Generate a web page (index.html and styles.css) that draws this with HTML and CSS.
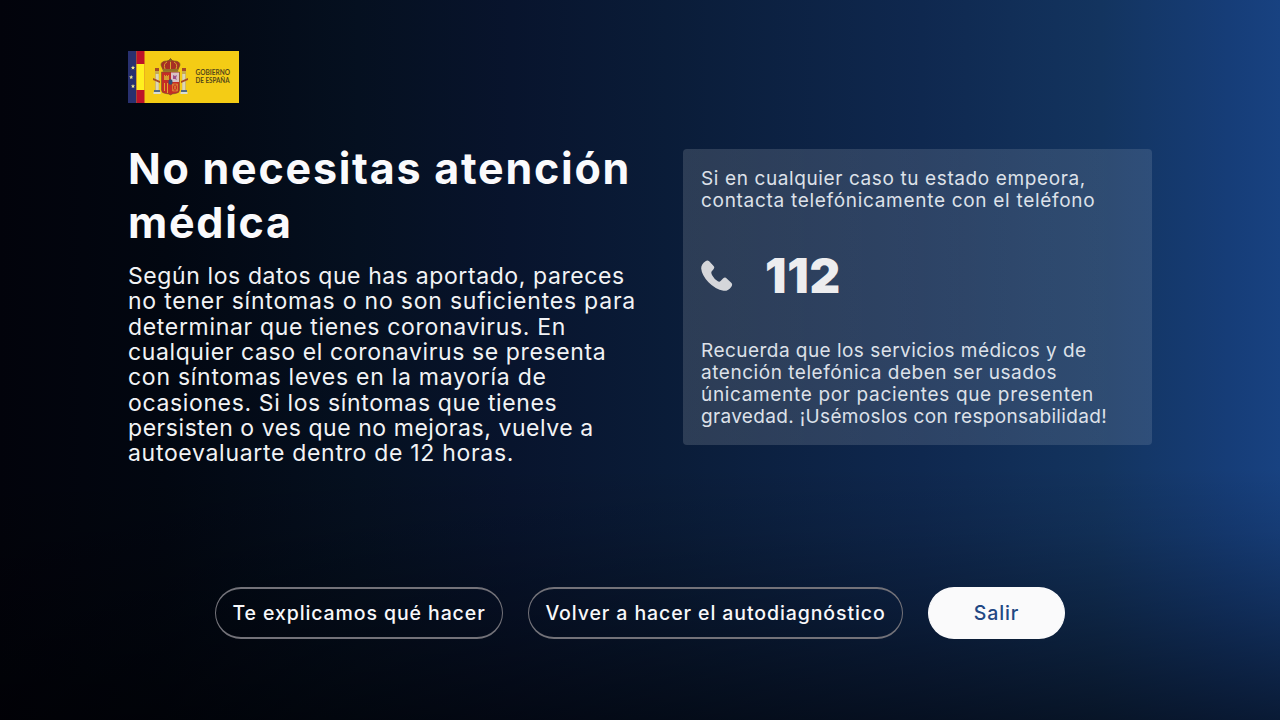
FILE: index.html
```html
<!DOCTYPE html>
<html lang="es">
<head>
<meta charset="utf-8">
<title>Autodiagnóstico</title>
<link rel="stylesheet" href="styles.css">
</head>
<body>
<div class="screen">
  <header class="header">
    <svg class="logo" viewBox="0 0 111 52">
      <rect width="111" height="52" fill="#f4cc15"/>
      <rect width="8.5" height="52" fill="#28306f"/>
      <rect x="8.5" width="8" height="52" fill="#bd1229"/>
      <rect x="8.5" y="13" width="8" height="26" fill="#fff01f"/>
      <path fill="#eee88a" d="M5 14.5l.6 1.4 1.5.1-1.2 1 .4 1.5L5 17.700l-1.300.8.4-1.500-1.200-1 1.500-.1z"/>
      <path fill="#eee88a" d="M3.200 24l.6 1.400 1.500.1-1.200 1 .4 1.500-1.300-.8-1.300.8.4-1.500-1.200-1 1.500-.1zM5 33l.6 1.400 1.500.1-1.200 1 .4 1.500-1.300-.8-1.300.8.4-1.500-1.200-1 1.500-.1z"/>
      <g>
        <path fill="#c7aa4e" d="M27 18h4v22h-4zM54 18h4v22h-4z"/>
        <path fill="#ddd6b5" d="M27.700 23h3v17h-3zM54.300 23h3v17h-3z"/>
        <path fill="#a64b27" d="M27 17h4v3h-4zM54 17h4v3h-4zM25 27l7 3v2l-7-3zM60 27l-7 3v2l7-3z"/>
        <path fill="#536a83" d="M26 39h6v2h-6zM53 39h6v2h-6z"/>
        <path fill="#d9ddd0" d="M25.500 41h7v2h-7zM52.500 41h7v2h-7z"/>
        <path fill="#a72f24" stroke="#765820" stroke-width=".7" d="M35.500 20l-2.500-6q0-4 6-4 3-2 7 0 6 0 6 4l-2.500 6z"/>
        <path fill="none" stroke="#d6a52c" d="M42.500 19V9M37 18q-2-5 2-7M48 18q2-5-2-7"/>
        <path fill="none" stroke="#765820" stroke-width=".8" d="M42.500 7v4M41 8.500h3"/>
        <path fill="#947028" d="M35 18h15v2.500H35z"/>
        <path fill="#c52d25" stroke="#725331" stroke-width=".6" d="M33.500 21h18v18q0 3-4 3.500-3.500 0-5 1.500-1.500-1.500-5-1.500-4-.5-4-3.500z"/>
        <path fill="#d9c1c5" d="M43 21.500h8V31H43z"/>
        <path fill="#9d4e86" d="M45 28v-4l2 1 2-1-1 3 1 2-2-1z"/>
        <path fill="#d79b31" d="M36 29v-5h1v1h1v-1h1v1h1v-1h1v5z"/>
        <path stroke="#e0a62d" d="M36.500 32v8M39.500 32v10"/>
        <path fill="none" stroke="#dc8d35" stroke-width=".8" d="M44.500 33h5v7h-5zM45 33l4 7M49 33l-4 7"/>
        <ellipse cx="42.500" cy="31" rx="2" ry="2.800" fill="#315177"/>
      </g>
      <text class="logo-text" x="67.500" y="24" textLength="34.500" lengthAdjust="spacingAndGlyphs">GOBIERNO</text>
      <text class="logo-text" x="67.500" y="32" textLength="34" lengthAdjust="spacingAndGlyphs">DE ESPAÑA</text>
    </svg>
  </header>
  <main class="content">
    <section class="result">
      <h1 class="title"><span class="line t1">No necesitas atención</span><span class="line t2">médica</span></h1>
      <p class="body-text">
        <span class="line b1">Según los datos que has aportado, pareces</span>
        <span class="line b2">no tener síntomas o no son suficientes para</span>
        <span class="line b3">determinar que tienes coronavirus. En</span>
        <span class="line b4">cualquier caso el coronavirus se presenta</span>
        <span class="line b5">con síntomas leves en la mayoría de</span>
        <span class="line b6">ocasiones. Si los síntomas que tienes</span>
        <span class="line b7">persisten o ves que no mejoras, vuelve a</span>
        <span class="line b8">autoevaluarte dentro de 12 horas.</span>
      </p>
    </section>
    <aside class="panel">
      <p class="note">
        <span class="line n1">Si en cualquier caso tu estado empeora,</span>
        <span class="line n2">contacta telefónicamente con el teléfono</span>
      </p>
      <div class="phone">
        <svg class="phone-icon" viewBox="0 0 32 32"><path d="M4.500 1.200 Q6.500-.3 8.200 1.300L12.600 6Q14 7.500 12.500 9.200L10.600 11.500Q9.800 13 11.300 15.500Q13.500 19.500 16.800 21.300Q18.500 22.200 19.800 20.800L22 18.500Q24 16.800 25.700 18.400L30 22.400Q32 24.200 30.500 26.400Q27.300 31.300 22.500 30.800Q14.500 29.500 7.500 22.300Q.8 15.200.2 8.500Q0 4.500 4.500 1.200Z"/></svg>
        <span class="number">112</span>
      </div>
      <p class="note">
        <span class="line n3">Recuerda que los servicios médicos y de</span>
        <span class="line n4">atención telefónica deben ser usados</span>
        <span class="line n5">únicamente por pacientes que presenten</span>
        <span class="line n6">gravedad. ¡Usémoslos con responsabilidad!</span>
      </p>
    </aside>
  </main>
  <nav class="actions">
    <button class="btn explain">Te explicamos qué hacer</button>
    <button class="btn again">Volver a hacer el autodiagnóstico</button>
    <button class="btn exit">Salir</button>
  </nav>
</div>
</body>
</html>
```

FILE: styles.css
```css
* { box-sizing: border-box; }
body { margin: 0; font-family: Inter, "Liberation Sans", sans-serif; color: #fafafc; }
.screen {
  width: 1280px; height: 720px; overflow: hidden;
  display: flex; flex-direction: column;
  padding: 51px 128px 0;
  background:
    linear-gradient(to bottom, transparent 65%, rgba(0,0,3,.1) 74%, rgba(0,0,3,.3) 85%, rgba(0,0,3,.6) 100%),
    linear-gradient(to right, #02030b 0, #020711 13%, #051020 28%, #08142d 40%, #0a1c38 52%, #0f284f 72%, #13345f 86%, #163d78 96%, #184281 100%);
}
.header { height: 98px; }
.logo { display: block; width: 111px; height: 52px; }
.logo-text { font-family: Lato, sans-serif; font-size: 7px; font-weight: 700; fill: #54481a; }
.content { display: flex; justify-content: space-between; height: 438px; align-items: flex-start; }
.result { width: 530px; }
.line { display: block; white-space: nowrap; width: max-content; }
.title { margin: -8px 0 0; font-size: 43px; line-height: 54px; font-weight: 700; letter-spacing: 1.75px; }
.body-text { margin: 15px 0 0; font-size: 23px; line-height: 25.350px; font-weight: 400; color: #f2f3f5; }
.b1 { letter-spacing: .6px; }
.b2 { letter-spacing: .78px; }
.b3 { letter-spacing: .68px; }
.b4 { letter-spacing: .61px; }
.b5 { letter-spacing: .735px; }
.b6 { letter-spacing: .635px; }
.b7 { letter-spacing: .555px; }
.b8 { letter-spacing: .69px; }
.panel {
  width: 469px; height: 296px; border-radius: 4px; padding: 19px 18px 17px;
  background: linear-gradient(to right, rgba(255,255,255,.14), rgba(255,255,255,.115));
  display: flex; flex-direction: column;
}
.note { margin: 0; font-size: 19px; line-height: 22px; font-weight: 400; color: #dde1e9; }
.n1 { letter-spacing: .61px; }
.n2 { letter-spacing: .7px; }
.n3 { letter-spacing: .46px; }
.n4 { letter-spacing: .54px; }
.n5 { letter-spacing: .66px; }
.n6 { letter-spacing: .34px; }
.phone { display: flex; align-items: center; gap: 32px; height: 128px; }
.phone-icon { width: 32px; height: 32px; fill: #d5d6da; }
.number { font-size: 47.500px; font-weight: 900; letter-spacing: .8px; color: #ededef; line-height: 60px; }
.actions { display: flex; justify-content: center; gap: 25px; }
.btn {
  height: 52px; padding: 0; border: solid #737279; border-width: 2px 1px; border-radius: 26px;
  background: transparent; color: #f8f8fa;
  font: 500 19.500px/24px Inter, "Liberation Sans", sans-serif; letter-spacing: .9px; white-space: nowrap;
}
.explain { width: 288px; }
.again { width: 375px; }
.exit { width: 137px; background: #fafafb; border-color: #fafafb; color: #214783; }
```
